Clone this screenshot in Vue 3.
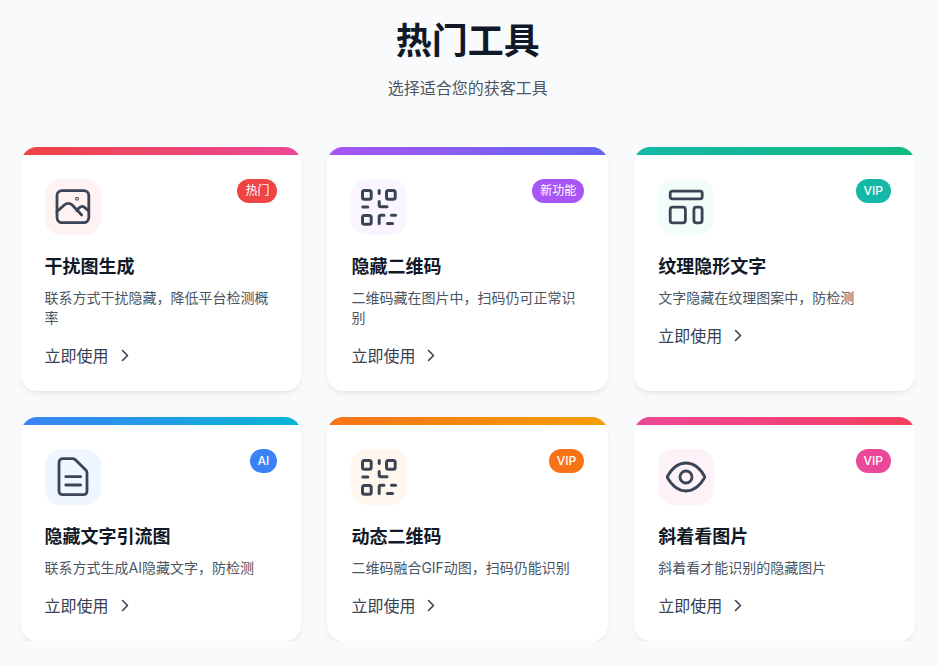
<script setup>
const tools = [
  { title: '干扰图生成', desc: '联系方式干扰隐藏，降低平台检测概率', tag: '热门', icon: 'image', theme: 'red' },
  { title: '隐藏二维码', desc: '二维码藏在图片中，扫码仍可正常识别', tag: '新功能', icon: 'qr', theme: 'purple' },
  { title: '纹理隐形文字', desc: '文字隐藏在纹理图案中，防检测', tag: 'VIP', icon: 'layout', theme: 'teal' },
  { title: '隐藏文字引流图', desc: '联系方式生成AI隐藏文字，防检测', tag: 'AI', icon: 'file', theme: 'blue' },
  { title: '动态二维码', desc: '二维码融合GIF动图，扫码仍能识别', tag: 'VIP', icon: 'qr', theme: 'orange' },
  { title: '斜着看图片', desc: '斜着看才能识别的隐藏图片', tag: 'VIP', icon: 'eye', theme: 'pink' }
]

// the qr glyph is drawn heavier than the others
const strokeFor = (icon) => (icon === 'qr' ? 3 : 2.8)

// latin labels sit at medium weight, chinese ones stay regular
const isLatin = (tag) => /^[A-Z]+$/.test(tag)
</script>

<template>
  <main class="page">
    <header class="head">
      <h1>热门工具</h1>
      <p>选择适合您的获客工具</p>
    </header>

    <section class="grid">
      <article v-for="tool in tools" :key="tool.title" :class="['card', tool.theme]">
        <div class="bar"></div>
        <div class="body">
          <div class="top">
            <div class="icon">
              <svg viewBox="0 0 40 40" width="40" height="40" fill="none" stroke="#3b4454" :stroke-width="strokeFor(tool.icon)" stroke-linecap="round" stroke-linejoin="round">
                <template v-if="tool.icon === 'image'">
                  <rect x="4" y="3.6" width="31.8" height="32" rx="5" />
                  <path d="M4 24.5 L11 18.2 Q15.3 14.6 19.5 18.2 L28.7 28" />
                  <path d="M23.7 23.4 L26.5 20.6 Q29 18.4 31.5 20.3 L35.8 23.8" />
                  <circle cx="24" cy="11.7" r="0.5" />
                </template>
                <template v-else-if="tool.icon === 'qr'">
                  <rect x="3.5" y="3.5" width="8.7" height="8.7" rx="2" />
                  <rect x="27.5" y="3.5" width="8.7" height="8.7" rx="2" />
                  <rect x="3.5" y="28.5" width="8.7" height="8.7" rx="2" />
                  <path d="M20.2 3.5v3" />
                  <path d="M20.2 14.5v3.5q0 1.8 1.8 1.8h6" />
                  <path d="M3.8 20h5" />
                  <path d="M20.2 36.5v-6.5q0-1.8 1.8-1.8h3" />
                  <path d="M32.5 28.2h4" />
                  <path d="M28.5 36.5h5" />
                </template>
                <template v-else-if="tool.icon === 'layout'">
                  <rect x="4.2" y="4.2" width="32" height="7.6" rx="2" />
                  <rect x="4.2" y="20.2" width="15.2" height="15.6" rx="2.5" />
                  <rect x="27.9" y="20.2" width="8.2" height="15.6" rx="2.5" />
                </template>
                <template v-else-if="tool.icon === 'file'">
                  <path d="M10 1.6h9.5q1.5 0 2.6 1l10.7 10.5q1.2 1.2 1.2 2.8v17.8q0 4-4 4h-20q-4 0-4-4v-28q0-4.1 4-4.100z" />
                  <path d="M12.8 19.7h14.8M12.8 28h14.8" />
                </template>
                <template v-else>
                  <path d="M1 20c5-9 11-14 19-14s14 5 19 14c-5 9-11 14-19 14S6 29 1 20z" />
                  <circle cx="20" cy="20" r="6" />
                </template>
              </svg>
            </div>
            <span :class="['tag', { latin: isLatin(tool.tag) }]">{{ tool.tag }}</span>
          </div>
          <h3>{{ tool.title }}</h3>
          <p class="desc">{{ tool.desc }}</p>
          <a class="link">
            立即使用
            <svg viewBox="0 0 10 14" width="10" height="14" fill="none" stroke="#3b4454" stroke-width="1.6" stroke-linecap="round" stroke-linejoin="round">
              <path d="M2.5 1.5 L7.5 6.5 L2.5 11.500" />
            </svg>
          </a>
        </div>
      </article>
    </section>
  </main>
</template>

<style>
html,
body {
  background: #f9fafb;
}
</style>

<style scoped>
.page {
  width: 894.4px;
  margin-left: 20.6px;
  font-family: Inter, "Noto Sans CJK SC", sans-serif;
  color: #111827;
}

.head {
  text-align: center;
  padding-top: 16px;
  margin-bottom: 47px;
}

.head h1 {
  margin: 0;
  font-size: 36px;
  line-height: 50px;
  font-weight: 700;
}

.head p {
  margin: 10px 0 0;
  font-size: 16px;
  line-height: 24px;
  color: #4b5563;
}

.grid {
  display: grid;
  grid-template-columns: repeat(3, 1fr);
  gap: 26px;
}

.card {
  background: #fff;
  border-radius: 16px;
  overflow: hidden;
  box-shadow: 0 4px 6px -1px rgba(0, 0, 0, 0.06), 0 2px 4px -2px rgba(0, 0, 0, 0.05);
}

.bar {
  height: 8px;
}

.body {
  padding: 24px 24px 23px;
}

.top {
  display: flex;
  justify-content: space-between;
  align-items: flex-start;
}

.icon {
  width: 56px;
  height: 56px;
  border-radius: 16px;
  display: flex;
  align-items: center;
  justify-content: center;
}

.tag {
  height: 24px;
  line-height: 24px;
  padding: 0 8px;
  border-radius: 12px;
  font-size: 12px;
  font-weight: 400;
  color: #fff;
}

.tag.latin {
  font-weight: 500;
}

h3 {
  margin: 17px 0 7px;
  font-size: 18px;
  line-height: 29px;
  font-weight: 700;
}

.desc {
  margin: 0 0 16px;
  font-size: 14px;
  line-height: 20px;
  color: #4b5563;
}

.link {
  display: flex;
  align-items: center;
  gap: 11px;
  font-size: 16px;
  line-height: 24px;
  color: #374151;
}

.red .bar { background: linear-gradient(90deg, #ef4444, #ec4899); }
.red .icon { background: #fef2f2; }
.red .tag { background: #ef4444; }

.purple .bar { background: linear-gradient(90deg, #a855f7, #6366f1); }
.purple .icon { background: #faf5ff; }
.purple .tag { background: #a855f7; }

.teal .bar { background: linear-gradient(90deg, #14b8a6, #10b981); }
.teal .icon { background: #f0fdfa; }
.teal .tag { background: #14b8a6; }

.blue .bar { background: linear-gradient(90deg, #3b82f6, #06b6d4); }
.blue .icon { background: #eff6ff; }
.blue .tag { background: #3b82f6; }

.orange .bar { background: linear-gradient(90deg, #f97316, #f59e0b); }
.orange .icon { background: #fff7ed; }
.orange .tag { background: #f97316; }

.pink .bar { background: linear-gradient(90deg, #ec4899, #f43f5e); }
.pink .icon { background: #fdf2f8; }
.pink .tag { background: #ec4899; }
</style>
